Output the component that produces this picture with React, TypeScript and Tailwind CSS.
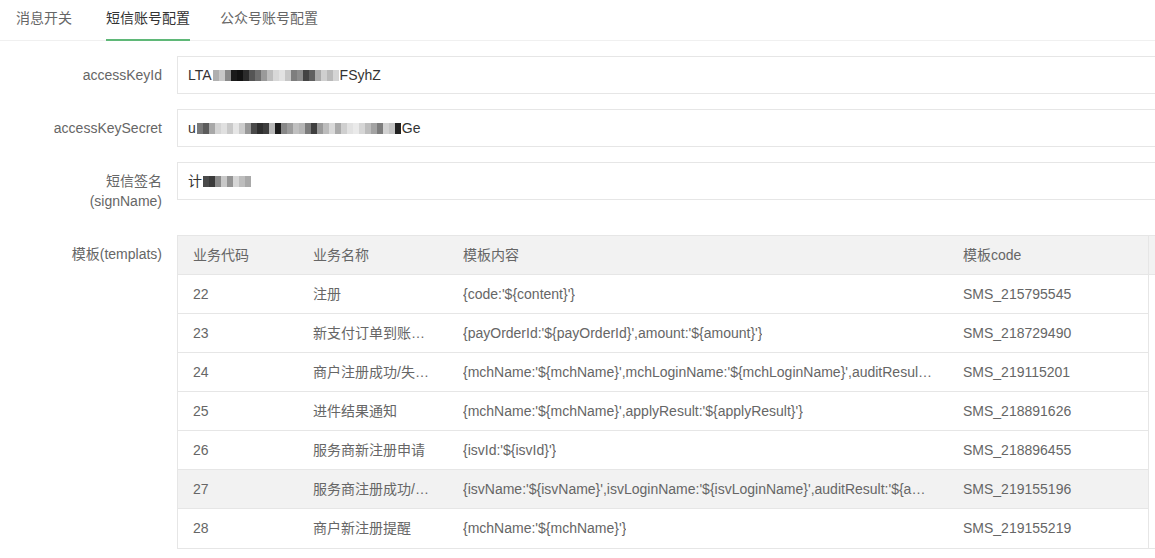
import React from 'react';

type Row = { code: string; name: string; content: string; tpl: string };

const rows: Row[] = [
  { code: '22', name: '注册', content: "{code:'${content}'}", tpl: 'SMS_215795545' },
  { code: '23', name: '新支付订单到账通知', content: "{payOrderId:'${payOrderId}',amount:'${amount}'}", tpl: 'SMS_218729490' },
  { code: '24', name: '商户注册成功/失败通知', content: "{mchName:'${mchName}',mchLoginName:'${mchLoginName}',auditResult:'${auditResult}'}", tpl: 'SMS_219115201' },
  { code: '25', name: '进件结果通知', content: "{mchName:'${mchName}',applyResult:'${applyResult}'}", tpl: 'SMS_218891626' },
  { code: '26', name: '服务商新注册申请', content: "{isvId:'${isvId}'}", tpl: 'SMS_218896455' },
  { code: '27', name: '服务商注册成功/失败通知', content: "{isvName:'${isvName}',isvLoginName:'${isvLoginName}',auditResult:'${auditResult}'}", tpl: 'SMS_219155196' },
  { code: '28', name: '商户新注册提醒', content: "{mchName:'${mchName}'}", tpl: 'SMS_219155219' },
];

// masked chunks of the secret values (pixelated cells)
const maskKeyId = ['#b0b0b0', '#c8c8c8', '#8a8a8a', '#1a1a1a', '#111', '#2b2b2b', '#555', '#6f6f6f', '#9a9a9a', '#bdbdbd', '#d8d8d8', '#e2e2e2', '#c6c6c6', '#7e7e7e', '#8d8d8d', '#444', '#5f5f5f', '#a9a9a9', '#cfcfcf', '#b9b9b9', '#d4d4d4'];
const maskSecret = ['#7a7a7a', '#5c5c5c', '#a8a8a8', '#d4d4d4', '#e0e0e0', '#c9c9c9', '#e6e6e6', '#cccccc', '#999', '#4a4a4a', '#2e2e2e', '#3d3d3d', '#b8b8b8', '#1c1c1c', '#888', '#9d9d9d', '#c0c0c0', '#b5b5b5', '#7c7c7c', '#3f3f3f', '#9a9a9a', '#bcbcbc', '#d9d9d9', '#aaa', '#cfcfcf', '#e2e2e2', '#eaeaea', '#d6d6d6', '#bdbdbd', '#a3a3a3', '#7d7d7d', '#d2d2d2', '#c4c4c4', '#222'];
const maskSign = ['#4a4a4a', '#3a3a3a', '#8a8a8a', '#c8c8c8', '#949494', '#d6d6d6', '#bdbdbd', '#a9a9a9'];

function Mosaic({ cells }: { cells: string[] }) {
  return (
    <span className="inline-flex items-center h-[12px] mx-[1px]">
      {cells.map((c, i) => (
        <span key={i} className="inline-block w-[6px] h-[11px]" style={{ backgroundColor: c }} />
      ))}
    </span>
  );
}

function FormItem({ label, children }: { label: React.ReactNode; children: React.ReactNode }) {
  return (
    <div className="flex items-start mb-[15px]">
      <div className="w-[177px] shrink-0 pr-[15px] py-[9px] text-right leading-[20px] text-[14px] text-[#666]">{label}</div>
      {children}
    </div>
  );
}

function Field({ children }: { children: React.ReactNode }) {
  return (
    <div className="w-[1000px] shrink-0 h-[38px] border border-[#e6e6e6] pl-[10px] flex items-center text-[14px] text-[#333]">
      {children}
    </div>
  );
}

export default function App() {
  return (
    <div className="w-[1155px] h-[558px] overflow-hidden bg-white font-['Liberation_Sans','Noto_Sans_CJK_SC',sans-serif]">
      {/* tabs */}
      <div className="h-[41px] border-b border-[#f0f0f0] flex text-[14px] leading-[20px]">
        <div className="ml-[16px] pt-[8px] text-[#666]">消息开关</div>
        <div className="ml-[34px] pt-[8px] text-[#333] relative">
          短信账号配置
          <span className="absolute left-0 right-0 bottom-[-1px] h-[2px] bg-[#5fb878]" />
        </div>
        <div className="ml-[30px] pt-[8px] text-[#666]">公众号账号配置</div>
      </div>

      <div className="pt-[15px]">
        <FormItem label="accessKeyId">
          <Field>
            LTA<Mosaic cells={maskKeyId} />FSyhZ
          </Field>
        </FormItem>
        <FormItem label="accessKeySecret">
          <Field>
            u<Mosaic cells={maskSecret} />Ge
          </Field>
        </FormItem>
        <FormItem label={<>短信签名<br />(signName)</>}>
          <Field>
            计<Mosaic cells={maskSign} />
          </Field>
        </FormItem>

        <FormItem label="模板(templats)">
          <div className="w-[1000px] shrink-0 border border-[#e6e6e6] text-[14px] text-[#666]">
            <div className="flex h-[39px] bg-[#f2f2f2] border-b border-[#e6e6e6]">
              <div className="w-[120px] shrink-0 px-[15px] flex items-center">业务代码</div>
              <div className="w-[150px] shrink-0 px-[15px] flex items-center">业务名称</div>
              <div className="w-[500px] shrink-0 px-[15px] flex items-center">模板内容</div>
              <div className="w-[201px] shrink-0 px-[15px] flex items-center border-r border-[#e6e6e6]">模板code</div>
            </div>
            {rows.map((r, i) => (
              <div key={r.code} className={`flex w-[971px] h-[39px] ${i < rows.length - 1 ? 'border-b border-[#e6e6e6]' : 'h-[38px]'} ${r.code === '27' ? 'bg-[#f2f2f2]' : ''}`}>
                <div className="w-[120px] shrink-0 px-[15px] flex items-center">{r.code}</div>
                <div className="w-[150px] shrink-0 px-[15px] flex items-center min-w-0">
                  <span className="truncate">{r.name}</span>
                </div>
                <div className="w-[500px] shrink-0 px-[15px] flex items-center min-w-0">
                  <span className="truncate">{r.content}</span>
                </div>
                <div className="w-[201px] shrink-0 px-[15px] flex items-center border-r border-[#e6e6e6]">{r.tpl}</div>
              </div>
            ))}
          </div>
        </FormItem>
      </div>
    </div>
  );
}
